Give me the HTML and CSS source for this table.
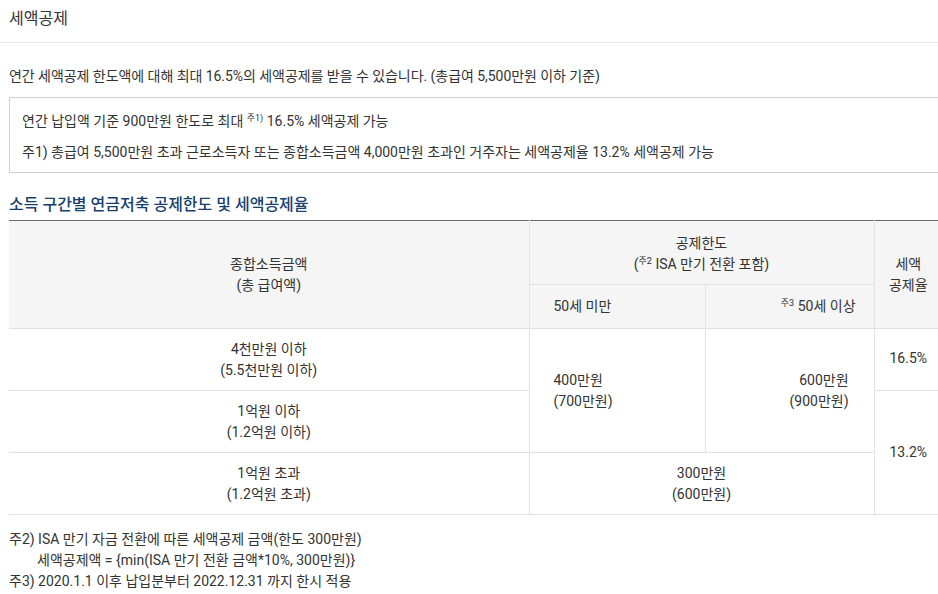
FILE: index.html
```html
<!DOCTYPE html>
<html lang="ko">
<head>
<meta charset="utf-8">
<title>세액공제</title>
<link rel="stylesheet" href="styles.css">
</head>
<body>
<header class="page-head">
  <h1 class="page-title">세액공제</h1>
</header>
<main class="content">
  <p class="intro">연간 세액공제 한도액에 대해 최대 16.5%의 세액공제를 받을 수 있습니다. (총급여 5,500만원 이하 기준)</p>
  <div class="note-box">
    <p class="note-line">연간 납입액 기준 900만원 한도로 최대 <sup class="mark">주1)</sup> 16.5% 세액공제 가능</p>
    <p class="note-line">주1) 총급여 5,500만원 초과 근로소득자 또는 종합소득금액 4,000만원 초과인 거주자는 세액공제율 13.2% 세액공제 가능</p>
  </div>

  <h2 class="section-title">소득 구간별 연금저축 공제한도 및 세액공제율</h2>
  <table class="rate-table">
    <colgroup>
      <col class="c1"><col class="c2"><col class="c3"><col class="c4">
    </colgroup>
    <thead>
      <tr class="hr1">
        <th rowspan="2" class="first">종합소득금액<br>(총 급여액)</th>
        <th colspan="2">공제한도<br>(<sup class="mark">주2</sup> ISA 만기 전환 포함)</th>
        <th rowspan="2" class="last">세액<br>공제율</th>
      </tr>
      <tr class="hr2">
        <th class="left">50세 미만</th>
        <th class="right"><sup class="mark">주3</sup> 50세 이상</th>
      </tr>
    </thead>
    <tbody>
      <tr>
        <td class="first">4천만원 이하<br>(5.5천만원 이하)</td>
        <td rowspan="2" class="left">400만원<br>(700만원)</td>
        <td rowspan="2" class="right body-right">600만원<br>(900만원)</td>
        <td class="last top-rate">16.5%</td>
      </tr>
      <tr>
        <td class="first">1억원 이하<br>(1.2억원 이하)</td>
        <td rowspan="2" class="last">13.2%</td>
      </tr>
      <tr>
        <td class="first">1억원 초과<br>(1.2억원 초과)</td>
        <td colspan="2">300만원<br>(600만원)</td>
      </tr>
    </tbody>
  </table>

  <div class="footnotes">
    <p>주2) ISA 만기 자금 전환에 따른 세액공제 금액(한도 300만원)</p>
    <p class="indent">세액공제액 = {min(ISA 만기 전환 금액*10%, 300만원)}</p>
    <p>주3) 2020.1.1 이후 납입분부터 2022.12.31 까지 한시 적용</p>
  </div>
</main>
</body>
</html>
```

FILE: styles.css
```css
html, body {
  margin: 0;
  padding: 0;
  overflow: hidden;
  background: #fff;
}

body {
  font-family: Roboto, "Noto Sans CJK KR", sans-serif;
  font-size: 14px;
  color: #333;
  width: 950px;
}

p { margin: 0; }

.page-head {
  height: 43px;
  border-bottom: 1px solid #e9e9e9;
  padding: 2px 0 0 9px;
  box-sizing: border-box;
}

.page-title {
  margin: 0;
  font-size: 16px;
  font-weight: 400;
  line-height: 34px;
  color: #333;
}

.content {
  padding-left: 9px;
  width: 933px;
}

.intro {
  line-height: 21px;
  margin-top: 23px;
  letter-spacing: -0.05px;
}

.note-box {
  margin-top: 10px;
  border: 1px solid #cfcfcf;
  padding: 13px 12px 9px;
  display: flex;
  flex-direction: column;
  gap: 10px;
}

.note-line {
  line-height: 21px;
}

.mark {
  font-size: 9px;
  line-height: 0;
  vertical-align: 5px;
}

.section-title {
  margin: 21px 0 5px;
  font-size: 16px;
  line-height: 21px;
  font-weight: 500;
  color: #17406f;
}

.rate-table {
  width: 933px;
  border-collapse: collapse;
  table-layout: fixed;
  border-top: 1px solid #6b6b6b;
}

.c1 { width: 520px; }
.c2 { width: 176px; }
.c3 { width: 169px; }
.c4 { width: 68px; }

.rate-table th,
.rate-table td {
  border: 1px solid #e2e2e2;
  text-align: center;
  vertical-align: middle;
  line-height: 21px;
  font-weight: 400;
  padding: 0;
  color: #333;
}

.rate-table thead th {
  background: #f5f5f5;
  border-top: none;
}

.rate-table .first { border-left: none; }
.rate-table .last { border-right: none; }

.hr1 { height: 64px; }
.hr1 th[colspan] { padding-top: 2px; }
.hr2 { height: 44px; }
.hr2 th { border-bottom: none; }
.rate-table tbody tr { height: 62px; }

.rate-table .left {
  text-align: left;
  padding-left: 24px;
}

.rate-table .right {
  text-align: right;
  padding-right: 18px;
}

.rate-table .body-right {
  padding-right: 25px;
}

.rate-table td.top-rate {
  vertical-align: top;
  padding-top: 19px;
}

.footnotes {
  margin-top: 14px;
  line-height: 21px;
}

.footnotes .indent {
  padding-left: 28px;
}
```
